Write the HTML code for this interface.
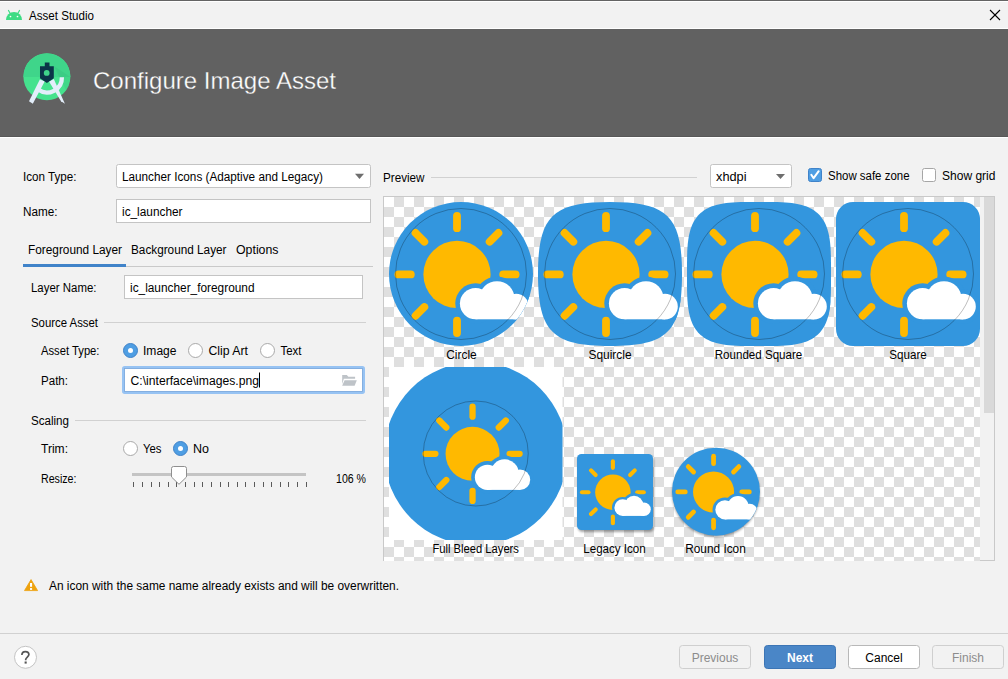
<!DOCTYPE html><html><head><meta charset="utf-8"><style>html,body{margin:0;padding:0;background:#f2f2f2;width:1008px;height:679px;overflow:hidden}</style></head><body><svg width="1008" height="679" viewBox="0 0 1008 679" font-family='"Liberation Sans", sans-serif' style="display:block"><defs><pattern id="checker" x="384" y="197" width="20" height="20" patternUnits="userSpaceOnUse"><rect width="20" height="20" fill="#fff"/><rect x="10" width="10" height="10" fill="#dfdfdf"/><rect y="10" width="10" height="10" fill="#dfdfdf"/></pattern><g id="fg"><circle cx="54" cy="54" r="57" fill="#3396de"/><circle cx="52" cy="54.2" r="16.8" fill="#ffb900"/><g stroke="#ffb900" stroke-width="3.9" stroke-linecap="round"><line x1="75.100" y1="54.200" x2="81.300" y2="54.200"/><line x1="68.334" y1="70.534" x2="72.718" y2="74.918"/><line x1="52.000" y1="77.300" x2="52.000" y2="83.500"/><line x1="35.666" y1="70.534" x2="31.282" y2="74.918"/><line x1="28.900" y1="54.200" x2="22.700" y2="54.200"/><line x1="35.666" y1="37.866" x2="31.282" y2="33.482"/><line x1="52.000" y1="31.100" x2="52.000" y2="24.900"/><line x1="68.334" y1="37.866" x2="72.718" y2="33.482"/></g><g fill="#3396de"><circle cx="61.3" cy="68.8" r="10.149999999999999"/><circle cx="72" cy="66.4" r="11.100000000000001"/><circle cx="81.5" cy="70.3" r="8.7"/><rect x="61.3" y="63.7" width="20.2" height="12.950000000000006"/></g><g fill="#fff"><circle cx="61.3" cy="68.8" r="7.85"/><circle cx="72" cy="66.4" r="8.8"/><circle cx="81.5" cy="70.3" r="6.4"/><rect x="61.3" y="66" width="20.2" height="10.650000000000006"/></g></g><clipPath id="cCircle"><circle cx="461" cy="274" r="72"/></clipPath><clipPath id="cSquircle"><path d="M610.00,202.00 C552.40,202.00 538.00,216.40 538.00,274.00 C538.00,331.60 552.40,346.00 610.00,346.00 C667.60,346.00 682.00,331.60 682.00,274.00 C682.00,216.40 667.60,202.00 610.00,202.00 Z"/></clipPath><clipPath id="cRSq"><path d="M831.00,274.00 L830.97,286.51 L830.88,292.19 L830.73,296.63 L830.52,300.41 L830.25,303.76 L829.92,306.80 L829.53,309.58 L829.07,312.16 L828.56,314.58 L827.98,316.84 L827.35,318.97 L826.65,320.98 L825.88,322.89 L825.06,324.69 L824.16,326.40 L823.21,328.02 L822.18,329.56 L821.09,331.02 L819.93,332.40 L818.70,333.70 L817.40,334.93 L816.02,336.09 L814.56,337.18 L813.02,338.21 L811.40,339.16 L809.69,340.06 L807.89,340.88 L805.98,341.65 L803.97,342.35 L801.84,342.98 L799.58,343.56 L797.16,344.07 L794.58,344.53 L791.80,344.92 L788.76,345.25 L785.41,345.52 L781.63,345.73 L777.19,345.88 L771.51,345.97 L759.00,346.00 L746.49,345.97 L740.81,345.88 L736.37,345.73 L732.59,345.52 L729.24,345.25 L726.20,344.92 L723.42,344.53 L720.84,344.07 L718.42,343.56 L716.16,342.98 L714.03,342.35 L712.02,341.65 L710.11,340.88 L708.31,340.06 L706.60,339.16 L704.98,338.21 L703.44,337.18 L701.98,336.09 L700.60,334.93 L699.30,333.70 L698.07,332.40 L696.91,331.02 L695.82,329.56 L694.79,328.02 L693.84,326.40 L692.94,324.69 L692.12,322.89 L691.35,320.98 L690.65,318.97 L690.02,316.84 L689.44,314.58 L688.93,312.16 L688.47,309.58 L688.08,306.80 L687.75,303.76 L687.48,300.41 L687.27,296.63 L687.12,292.19 L687.03,286.51 L687.00,274.00 L687.03,261.49 L687.12,255.81 L687.27,251.37 L687.48,247.59 L687.75,244.24 L688.08,241.20 L688.47,238.42 L688.93,235.84 L689.44,233.42 L690.02,231.16 L690.65,229.03 L691.35,227.02 L692.12,225.11 L692.94,223.31 L693.84,221.60 L694.79,219.98 L695.82,218.44 L696.91,216.98 L698.07,215.60 L699.30,214.30 L700.60,213.07 L701.98,211.91 L703.44,210.82 L704.98,209.79 L706.60,208.84 L708.31,207.94 L710.11,207.12 L712.02,206.35 L714.03,205.65 L716.16,205.02 L718.42,204.44 L720.84,203.93 L723.42,203.47 L726.20,203.08 L729.24,202.75 L732.59,202.48 L736.37,202.27 L740.81,202.12 L746.49,202.03 L759.00,202.00 L771.51,202.03 L777.19,202.12 L781.63,202.27 L785.41,202.48 L788.76,202.75 L791.80,203.08 L794.58,203.47 L797.16,203.93 L799.58,204.44 L801.84,205.02 L803.97,205.65 L805.98,206.35 L807.89,207.12 L809.69,207.94 L811.40,208.84 L813.02,209.79 L814.56,210.82 L816.02,211.91 L817.40,213.07 L818.70,214.30 L819.93,215.60 L821.09,216.98 L822.18,218.44 L823.21,219.98 L824.16,221.60 L825.06,223.31 L825.88,225.11 L826.65,227.02 L827.35,229.03 L827.98,231.16 L828.56,233.42 L829.07,235.84 L829.53,238.42 L829.92,241.20 L830.25,244.24 L830.52,247.59 L830.73,251.37 L830.88,255.81 L830.97,261.49 Z"/></clipPath><clipPath id="cSq"><rect x="836" y="202" width="144" height="144" rx="17"/></clipPath><clipPath id="cFull"><rect x="389" y="367" width="173.5" height="173"/></clipPath><clipPath id="cLegacy"><rect x="577" y="454" width="76" height="76" rx="4.5"/></clipPath><clipPath id="cRound"><circle cx="716" cy="491.7" r="44"/></clipPath><filter id="sh" x="-20%" y="-20%" width="140%" height="140%"><feGaussianBlur stdDeviation="1.2"/></filter><clipPath id="cPrev"><rect x="384" y="197" width="596" height="364"/></clipPath></defs><rect x="0" y="0" width="1008" height="679" rx="0" fill="#f2f2f2" /><rect x="0" y="0" width="1008" height="1" rx="0" fill="#646464" /><rect x="0" y="1" width="1008" height="1" rx="0" fill="#fff" /><rect x="0" y="28" width="1008" height="1" rx="0" fill="#fff" /><g fill="#3ddc84"><path d="M6,20 A8,8 0 0 1 22,20 Z"/></g><g stroke="#3ddc84" stroke-width="1.2" stroke-linecap="round"><line x1="8.5" y1="10.5" x2="10.5" y2="14"/><line x1="19.5" y1="10.5" x2="17.5" y2="14"/></g><circle cx="10.5" cy="16.5" r="0.85" fill="#fff"/><circle cx="17.5" cy="16.5" r="0.85" fill="#fff"/><text x="29" y="19.5" font-size="12" fill="#000" font-weight="normal" text-anchor="start" textLength="65" lengthAdjust="spacingAndGlyphs" >Asset Studio</text><g stroke="#000" stroke-width="1.1"><line x1="990" y1="10" x2="1000" y2="20"/><line x1="1000" y1="10" x2="990" y2="20"/></g><rect x="0" y="29" width="1008" height="107" rx="0" fill="#616161" /><rect x="0" y="136" width="1008" height="1" rx="0" fill="#585858" /><rect x="0" y="137" width="1008" height="1" rx="0" fill="#fff" /><circle cx="46.9" cy="76.7" r="23.5" fill="#45e28e"/><path d="M23.4,76.9 A23.5,23.5 0 0 1 70.4,76.9 Z" fill="#3fd58a"/><path d="M53.8,66 L70.4,76.9 A23.5,23.5 0 0 1 66,90 Z" fill="#2fa86e" opacity="0.18"/><g fill="#e3eefa"><path d="M39.8,79.6 L44.8,81.2 L32.8,103.8 L29,101.3 Z"/><path d="M49,81.4 L53.8,79 L64.9,103.8 L61,101.3 Z"/></g><path d="M38.2,89.6 A14.9,14.9 0 0 0 61.9,77.2" fill="none" stroke="#e3eefa" stroke-width="4.3"/><path d="M44.8,62.4 h4.7 v3.8 h4.3 v12 l-6.9,4.7 l-6.9,-4.7 v-12 h4.8 z" fill="#0b3548"/><circle cx="46.7" cy="72.9" r="2.9" fill="#3fd48a"/><text x="93" y="88.5" font-size="24" fill="#fff" font-weight="normal" text-anchor="start" textLength="243" lengthAdjust="spacingAndGlyphs" stroke="#616161" stroke-width="0.3">Configure Image Asset</text><text x="23" y="180.7" font-size="12" fill="#000" font-weight="normal" text-anchor="start" textLength="53.5" lengthAdjust="spacingAndGlyphs" >Icon Type:</text><rect x="116.5" y="164.5" width="254" height="23" rx="2" fill="#fff" stroke="#c4c4c4" stroke-width="1" /><text x="122" y="181" font-size="12" fill="#000" font-weight="normal" text-anchor="start" textLength="201" lengthAdjust="spacingAndGlyphs" >Launcher Icons (Adaptive and Legacy)</text><path d="M355,173.8 L364,173.8 L359.5,178.9 Z" fill="#6e6e6e"/><text x="23" y="216" font-size="12" fill="#000" font-weight="normal" text-anchor="start" textLength="34.5" lengthAdjust="spacingAndGlyphs" >Name:</text><rect x="116.5" y="199.5" width="254" height="23" rx="0" fill="#fff" stroke="#c4c4c4" stroke-width="1" /><text x="122" y="216" font-size="12" fill="#000" font-weight="normal" text-anchor="start" textLength="60.5" lengthAdjust="spacingAndGlyphs" >ic_launcher</text><text x="28" y="254" font-size="12" fill="#000" font-weight="normal" text-anchor="start" textLength="94" lengthAdjust="spacingAndGlyphs" >Foreground Layer</text><text x="131" y="254" font-size="12" fill="#000" font-weight="normal" text-anchor="start" textLength="95.5" lengthAdjust="spacingAndGlyphs" >Background Layer</text><text x="236" y="254" font-size="12" fill="#000" font-weight="normal" text-anchor="start" textLength="42.5" lengthAdjust="spacingAndGlyphs" >Options</text><rect x="126" y="266" width="247" height="1" rx="0" fill="#c9c9c9" /><rect x="23" y="264" width="103" height="3" rx="0" fill="#4083c9" /><text x="31" y="292" font-size="12" fill="#000" font-weight="normal" text-anchor="start" textLength="65.5" lengthAdjust="spacingAndGlyphs" >Layer Name:</text><rect x="124.5" y="275.5" width="238" height="23" rx="0" fill="#fff" stroke="#c4c4c4" stroke-width="1" /><text x="130" y="292" font-size="12" fill="#000" font-weight="normal" text-anchor="start" textLength="124.5" lengthAdjust="spacingAndGlyphs" >ic_launcher_foreground</text><text x="31" y="327" font-size="12" fill="#000" font-weight="normal" text-anchor="start" textLength="67" lengthAdjust="spacingAndGlyphs" >Source Asset</text><rect x="104" y="322" width="262" height="1" rx="0" fill="#d1d1d1" /><text x="41" y="354.6" font-size="12" fill="#000" font-weight="normal" text-anchor="start" textLength="58.5" lengthAdjust="spacingAndGlyphs" >Asset Type:</text><circle cx="130.5" cy="350.5" r="7" fill="#4f9ee3" stroke="#4083c9" stroke-width="1"/><circle cx="130.5" cy="350.5" r="2.5" fill="#fff"/><text x="143" y="354.6" font-size="12" fill="#000" font-weight="normal" text-anchor="start" textLength="33.5" lengthAdjust="spacingAndGlyphs" >Image</text><circle cx="195.5" cy="350.5" r="7" fill="#fff" stroke="#a9a9a9" stroke-width="1"/><text x="208.5" y="354.6" font-size="12" fill="#000" font-weight="normal" text-anchor="start" textLength="39.5" lengthAdjust="spacingAndGlyphs" >Clip Art</text><circle cx="267.5" cy="350.5" r="7" fill="#fff" stroke="#a9a9a9" stroke-width="1"/><text x="280.5" y="354.6" font-size="12" fill="#000" font-weight="normal" text-anchor="start" textLength="21" lengthAdjust="spacingAndGlyphs" >Text</text><text x="41" y="384.6" font-size="12" fill="#000" font-weight="normal" text-anchor="start" textLength="27" lengthAdjust="spacingAndGlyphs" >Path:</text><rect x="123.25" y="367.25" width="240.5" height="25.5" rx="1.5" fill="#fff" stroke="#97c3f3" stroke-width="2.5" /><rect x="124.5" y="368.5" width="238" height="23" rx="0" fill="none" stroke="#7eaadd" stroke-width="0.9" /><text x="130.5" y="385" font-size="12" fill="#000" font-weight="normal" text-anchor="start" textLength="128.5" lengthAdjust="spacingAndGlyphs" >C:\interface\images.png</text><rect x="259" y="372.5" width="1" height="15" rx="0" fill="#000" /><path d="M342.2,375 h4.6 l1.6,1.8 h6.7 v2 h-11.3 l-1.6,5.5 z" fill="#bec3c8"/><path d="M344.6,380.2 h12.2 l-2.2,5.6 h-12.4 z" fill="#bec3c8"/><text x="31" y="424.6" font-size="12" fill="#000" font-weight="normal" text-anchor="start" textLength="38" lengthAdjust="spacingAndGlyphs" >Scaling</text><rect x="75" y="420" width="291" height="1" rx="0" fill="#d1d1d1" /><text x="41" y="452.5" font-size="12" fill="#000" font-weight="normal" text-anchor="start" textLength="27" lengthAdjust="spacingAndGlyphs" >Trim:</text><circle cx="130.5" cy="448.5" r="7" fill="#fff" stroke="#a9a9a9" stroke-width="1"/><text x="143" y="452.5" font-size="12" fill="#000" font-weight="normal" text-anchor="start" textLength="18.5" lengthAdjust="spacingAndGlyphs" >Yes</text><circle cx="180.5" cy="448.5" r="7" fill="#4f9ee3" stroke="#4083c9" stroke-width="1"/><circle cx="180.5" cy="448.5" r="2.5" fill="#fff"/><text x="193" y="452.5" font-size="12" fill="#000" font-weight="normal" text-anchor="start" textLength="16" lengthAdjust="spacingAndGlyphs" >No</text><text x="41" y="483" font-size="12" fill="#000" font-weight="normal" text-anchor="start" textLength="35.5" lengthAdjust="spacingAndGlyphs" >Resize:</text><rect x="132" y="473" width="174" height="3" rx="0" fill="#c4c4c4" /><rect x="133" y="482" width="1" height="5" rx="0" fill="#5a5a5a" /><rect x="142" y="482" width="1" height="5" rx="0" fill="#5a5a5a" /><rect x="151" y="482" width="1" height="5" rx="0" fill="#5a5a5a" /><rect x="159" y="482" width="1" height="5" rx="0" fill="#5a5a5a" /><rect x="168" y="482" width="1" height="5" rx="0" fill="#5a5a5a" /><rect x="176" y="482" width="1" height="5" rx="0" fill="#5a5a5a" /><rect x="185" y="482" width="1" height="5" rx="0" fill="#5a5a5a" /><rect x="194" y="482" width="1" height="5" rx="0" fill="#5a5a5a" /><rect x="202" y="482" width="1" height="5" rx="0" fill="#5a5a5a" /><rect x="211" y="482" width="1" height="5" rx="0" fill="#5a5a5a" /><rect x="220" y="482" width="1" height="5" rx="0" fill="#5a5a5a" /><rect x="228" y="482" width="1" height="5" rx="0" fill="#5a5a5a" /><rect x="237" y="482" width="1" height="5" rx="0" fill="#5a5a5a" /><rect x="245" y="482" width="1" height="5" rx="0" fill="#5a5a5a" /><rect x="254" y="482" width="1" height="5" rx="0" fill="#5a5a5a" /><rect x="263" y="482" width="1" height="5" rx="0" fill="#5a5a5a" /><rect x="271" y="482" width="1" height="5" rx="0" fill="#5a5a5a" /><rect x="280" y="482" width="1" height="5" rx="0" fill="#5a5a5a" /><rect x="288" y="482" width="1" height="5" rx="0" fill="#5a5a5a" /><rect x="297" y="482" width="1" height="5" rx="0" fill="#5a5a5a" /><rect x="306" y="482" width="1" height="5" rx="0" fill="#5a5a5a" /><path d="M171.5,468.5 Q171.5,466.5 173.5,466.5 L184.5,466.5 Q186.5,466.5 186.5,468.5 L186.5,477 L179,484.3 L171.5,477 Z" fill="#fff" stroke="#8f8f8f" stroke-width="1"/><text x="336" y="482.8" font-size="12" fill="#000" font-weight="normal" text-anchor="start" textLength="30" lengthAdjust="spacingAndGlyphs" >106 %</text><text x="383" y="181.5" font-size="12" fill="#000" font-weight="normal" text-anchor="start" textLength="41.5" lengthAdjust="spacingAndGlyphs" >Preview</text><rect x="431" y="177" width="266" height="1" rx="0" fill="#d1d1d1" /><rect x="710.5" y="164.5" width="81" height="23" rx="2" fill="#fff" stroke="#c4c4c4" stroke-width="1" /><text x="716" y="181" font-size="12" fill="#000" font-weight="normal" text-anchor="start" textLength="30.5" lengthAdjust="spacingAndGlyphs" >xhdpi</text><path d="M776,174 L785,174 L780.5,179 Z" fill="#6e6e6e"/><rect x="808.5" y="168.5" width="13" height="13" rx="2" fill="#4f9ee3" stroke="#4083c9"/><path d="M811.3,174.8 L813.6,178.2 L818.7,171.2" fill="none" stroke="#fff" stroke-width="2" stroke-linecap="round" stroke-linejoin="round"/><text x="828" y="180.1" font-size="12" fill="#000" font-weight="normal" text-anchor="start" textLength="81.5" lengthAdjust="spacingAndGlyphs" >Show safe zone</text><rect x="922.5" y="168.5" width="13" height="13" rx="2" fill="#fff" stroke="#a6a6a6"/><text x="942" y="180.1" font-size="12" fill="#000" font-weight="normal" text-anchor="start" textLength="53.5" lengthAdjust="spacingAndGlyphs" >Show grid</text><rect x="383.5" y="196.5" width="611" height="364" rx="0" fill="#f2f2f2" stroke="#c9c9c9" stroke-width="1" /><rect x="384" y="197" width="596" height="364" rx="0" fill="url(#checker)" /><rect x="984" y="197" width="10" height="216" rx="0" fill="#d9d9d9" /><g clip-path="url(#cPrev)"><g clip-path="url(#cCircle)"><use href="#fg" transform="translate(353.000,166.000) scale(2)"/></g><circle cx="461" cy="274" r="65.50" fill="none" stroke="rgba(0,0,0,0.26)" stroke-width="1"/><g clip-path="url(#cSquircle)"><use href="#fg" transform="translate(502.000,166.000) scale(2)"/></g><circle cx="610" cy="274" r="65.50" fill="none" stroke="rgba(0,0,0,0.26)" stroke-width="1"/><g clip-path="url(#cRSq)"><use href="#fg" transform="translate(651.000,166.000) scale(2)"/></g><circle cx="759" cy="274" r="65.50" fill="none" stroke="rgba(0,0,0,0.26)" stroke-width="1"/><g clip-path="url(#cSq)"><use href="#fg" transform="translate(800.000,166.000) scale(2)"/></g><circle cx="908" cy="274" r="65.50" fill="none" stroke="rgba(0,0,0,0.26)" stroke-width="1"/><text x="461.5" y="358.8" font-size="12" fill="#000" font-weight="normal" text-anchor="middle" textLength="30.5" lengthAdjust="spacingAndGlyphs" >Circle</text><text x="610" y="358.8" font-size="12" fill="#000" font-weight="normal" text-anchor="middle" textLength="43" lengthAdjust="spacingAndGlyphs" >Squircle</text><text x="758.5" y="358.8" font-size="12" fill="#000" font-weight="normal" text-anchor="middle" textLength="87.5" lengthAdjust="spacingAndGlyphs" >Rounded Square</text><text x="908" y="358.8" font-size="12" fill="#000" font-weight="normal" text-anchor="middle" textLength="37.5" lengthAdjust="spacingAndGlyphs" >Square</text><rect x="389" y="367" width="173.5" height="173" rx="0" fill="#fff" /><g clip-path="url(#cFull)"><use href="#fg" transform="translate(388.999,366.749) scale(1.6065)"/></g><circle cx="475.75" cy="453.5" r="52.51" fill="none" stroke="rgba(0,0,0,0.26)" stroke-width="1"/><rect x="578" y="456" width="76" height="76" rx="4.5" fill="rgba(0,0,0,0.35)" filter="url(#sh)"/><g clip-path="url(#cLegacy)"><use href="#fg" transform="translate(558.000,435.000) scale(1.0555555555555556)"/></g><circle cx="716" cy="493.2" r="44" fill="rgba(0,0,0,0.35)" filter="url(#sh)"/><g clip-path="url(#cRound)"><use href="#fg" transform="translate(650.000,425.700) scale(1.2222222222222223)"/></g><text x="475.7" y="552.5" font-size="12" fill="#000" font-weight="normal" text-anchor="middle" textLength="86.5" lengthAdjust="spacingAndGlyphs" >Full Bleed Layers</text><text x="614.5" y="552.5" font-size="12" fill="#000" font-weight="normal" text-anchor="middle" textLength="62.5" lengthAdjust="spacingAndGlyphs" >Legacy Icon</text><text x="715.5" y="552.5" font-size="12" fill="#000" font-weight="normal" text-anchor="middle" textLength="60.5" lengthAdjust="spacingAndGlyphs" >Round Icon</text></g><path d="M31.05,579.6 L37.6,590.6 L24.5,590.6 Z" fill="#eea20e" stroke="#eea20e" stroke-width="0.8" stroke-linejoin="round"/><rect x="30" y="583" width="2.1" height="3.8" fill="#fff"/><rect x="30" y="588.1" width="2.1" height="1.8" fill="#fff"/><text x="49" y="589.9" font-size="12" fill="#000" font-weight="normal" text-anchor="start" textLength="350" lengthAdjust="spacingAndGlyphs" >An icon with the same name already exists and will be overwritten.</text><rect x="0" y="633" width="1008" height="1" rx="0" fill="#d1d1d1" /><circle cx="25.5" cy="657.3" r="11" fill="#fff" stroke="#c4c4c4"/><path d="M21.9,655 C21.9,652.6 23.5,651.6 25.4,651.6 C27.4,651.6 28.9,652.8 28.9,654.6 C28.9,656.8 25.7,657.3 25.7,659.6 L25.7,660.2" fill="none" stroke="#555" stroke-width="1.7"/><rect x="24.6" y="661.5" width="2.1" height="2.1" fill="#555"/><rect x="679.5" y="645.5" width="71" height="23" rx="3" fill="#f2f2f2" stroke="#cfcfcf" stroke-width="1" /><text x="715" y="662" font-size="12" fill="#8c8c8c" font-weight="normal" text-anchor="middle" >Previous</text><rect x="764.5" y="645.5" width="71" height="23" rx="3" fill="#4a86c7" stroke="#3c75b5" stroke-width="1" /><text x="800" y="662" font-size="12" fill="#fff" font-weight="bold" text-anchor="middle" >Next</text><rect x="848.5" y="645.5" width="71" height="23" rx="3" fill="#fff" stroke="#b8b8b8" stroke-width="1" /><text x="884" y="662" font-size="12" fill="#000" font-weight="normal" text-anchor="middle" >Cancel</text><rect x="932.5" y="645.5" width="71" height="23" rx="3" fill="#f2f2f2" stroke="#cfcfcf" stroke-width="1" /><text x="968" y="662" font-size="12" fill="#8c8c8c" font-weight="normal" text-anchor="middle" >Finish</text></svg></body></html>
